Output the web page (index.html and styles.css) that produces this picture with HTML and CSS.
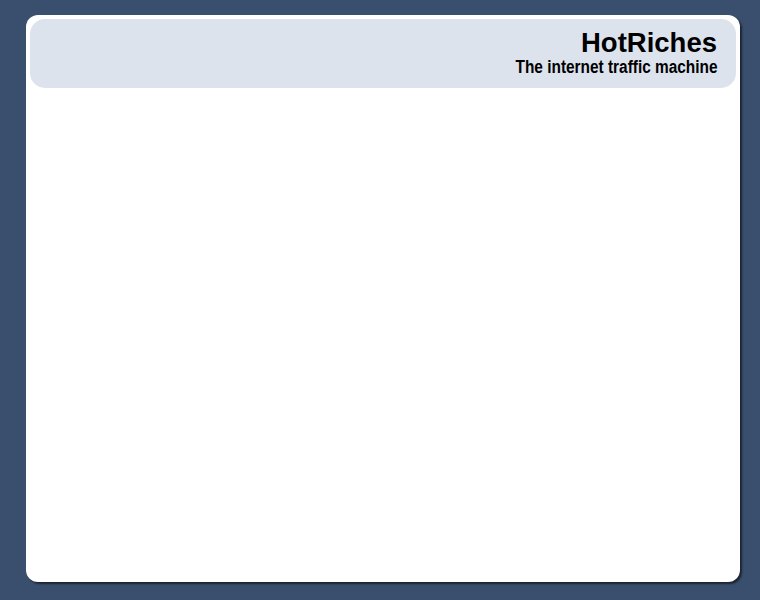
FILE: index.html
```html
<!DOCTYPE html>
<html>
<head>
<meta charset="utf-8">
<link rel="stylesheet" href="styles.css">
<title>HotRiches</title>
</head>
<body>
<div class="card">
  <header class="banner">
    <h1 class="title">HotRiches</h1>
    <p class="tagline"><span class="tagline-text">The internet traffic machine</span></p>
  </header>
</div>
</body>
</html>
```
FILE: styles.css
```css
html, body {
  margin: 0;
  padding: 0;
  background: #3a4f6e;
  height: 100%;
}
body {
  padding: 15px 20px 0 26px;
  box-sizing: border-box;
}
.card {
  width: 714px;
  height: 567px;
  background: #ffffff;
  border-radius: 12px;
  box-shadow: 2px 2px 2px rgba(0, 0, 0, 0.55);
  padding: 4px 4px 0 4px;
  box-sizing: border-box;
}
.banner {
  height: 69px;
  background: #dde3ed;
  border-radius: 15px;
  box-sizing: border-box;
  padding: 10px 19px 0 0;
  text-align: right;
  font-family: "Liberation Sans", Arial, sans-serif;
  color: #000;
}
.title {
  margin: 0;
  font-size: 27.5px;
  font-weight: bold;
  line-height: 28px;
}
.tagline {
  margin: 0;
  font-size: 17.5px;
  font-weight: bold;
  line-height: 21px;
}
.tagline-text {
  display: inline-block;
  transform: scaleX(0.88);
  transform-origin: right center;
}
```
